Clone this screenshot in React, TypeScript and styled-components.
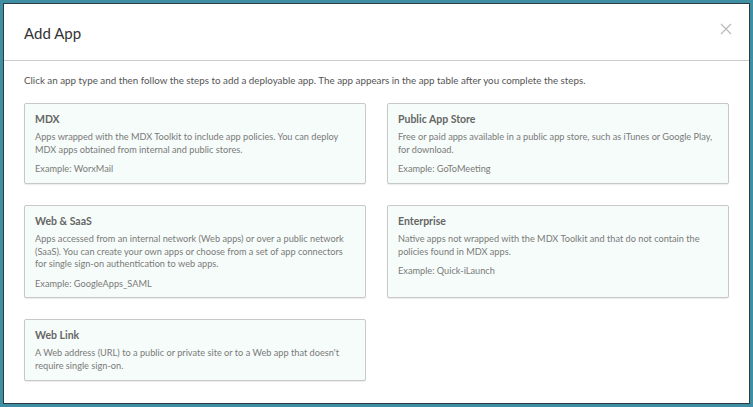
import React from 'react';
import styled, { createGlobalStyle } from 'styled-components';

const GlobalStyle = createGlobalStyle`
  html, body {
    margin: 0;
    padding: 0;
    background: #ffffff;
  }
  body {
    font-family: Lato, "Open Sans", "Liberation Sans", sans-serif;
  }
`;

const Frame = styled.div`
  box-sizing: border-box;
  width: 753px;
  height: 407px;
  border: 3px solid #3f8fa4;
  box-shadow: inset 0 0 0 1px #2d3b41;
  background: #ffffff;
  padding: 1px;
  overflow: hidden;
`;

const Header = styled.header`
  position: relative;
  display: flex;
  align-items: center;
  height: 57px;
  padding: 2px 20px 0 20px;
  box-sizing: border-box;
  border-bottom: 1px solid #cccccc;
`;

const Title = styled.h2`
  margin: 0;
  font-size: 15px;
  font-weight: 400;
  color: #333333;
`;

const CloseButton = styled.button`
  position: absolute;
  top: 18px;
  right: 16px;
  border: none;
  background: none;
  padding: 0;
  width: 14px;
  height: 14px;
  color: #b8b8b8;
  cursor: pointer;
  display: flex;
`;

const Body = styled.div`
  padding: 12px 20px 0 20px;
`;

const Intro = styled.p`
  margin: 0 0 16px 0;
  font-size: 9.8px;
  line-height: 14px;
  color: #555555;
`;

const Grid = styled.div`
  display: grid;
  grid-template-columns: 342px 342px;
  column-gap: 21px;
  row-gap: 21px;
  align-items: start;
`;

const Card = styled.div<{ $height: number }>`
  box-sizing: border-box;
  height: ${({ $height }) => $height}px;
  padding: 8px 10px;
  background: #f6fcf9;
  border: 1px solid #c8c8c8;
  border-radius: 2px;
  box-shadow: 0 1px 1px rgba(0, 0, 0, 0.08);
  cursor: pointer;
`;

const CardTitle = styled.div`
  font-size: 10.5px;
  font-weight: 700;
  color: #666666;
  line-height: 14px;
  margin-bottom: 5px;
`;

const CardText = styled.p`
  margin: 0;
  font-size: 9.2px;
  line-height: 12.5px;
  color: #7a7a7a;
`;

const Example = styled(CardText)`
  margin-top: 7px;
`;

type AppType = {
  name: string;
  text: string;
  example?: string;
  height: number;
};

const appTypes: AppType[] = [
  {
    name: 'MDX',
    text: 'Apps wrapped with the MDX Toolkit to include app policies. You can deploy MDX apps obtained from internal and public stores.',
    example: 'WorxMail',
    height: 81,
  },
  {
    name: 'Public App Store',
    text: 'Free or paid apps available in a public app store, such as iTunes or Google Play, for download.',
    example: 'GoToMeeting',
    height: 81,
  },
  {
    name: 'Web & SaaS',
    text: 'Apps accessed from an internal network (Web apps) or over a public network (SaaS). You can create your own apps or choose from a set of app connectors for single sign-on authentication to web apps.',
    example: 'GoogleApps_SAML',
    height: 93,
  },
  {
    name: 'Enterprise',
    text: 'Native apps not wrapped with the MDX Toolkit and that do not contain the policies found in MDX apps.',
    example: 'Quick-iLaunch',
    height: 93,
  },
  {
    name: 'Web Link',
    text: "A Web address (URL) to a public or private site or to a Web app that doesn't require single sign-on.",
    height: 62,
  },
];

const App: React.FC = () => {
  return (
    <>
      <GlobalStyle />
      <Frame>
        <Header>
          <Title>Add App</Title>
          <CloseButton aria-label="Close">
            <svg width="14" height="14" viewBox="0 0 14 14">
              <path d="M2 2 L12 12 M12 2 L2 12" stroke="currentColor" strokeWidth="1.1" fill="none" />
            </svg>
          </CloseButton>
        </Header>
        <Body>
          <Intro>
            Click an app type and then follow the steps to add a deployable app. The app appears in the app table after you complete the steps.
          </Intro>
          <Grid>
            {appTypes.map((app) => (
              <Card key={app.name} $height={app.height}>
                <CardTitle>{app.name}</CardTitle>
                <CardText>{app.text}</CardText>
                {app.example && <Example>Example: {app.example}</Example>}
              </Card>
            ))}
          </Grid>
        </Body>
      </Frame>
    </>
  );
};

export default App;
